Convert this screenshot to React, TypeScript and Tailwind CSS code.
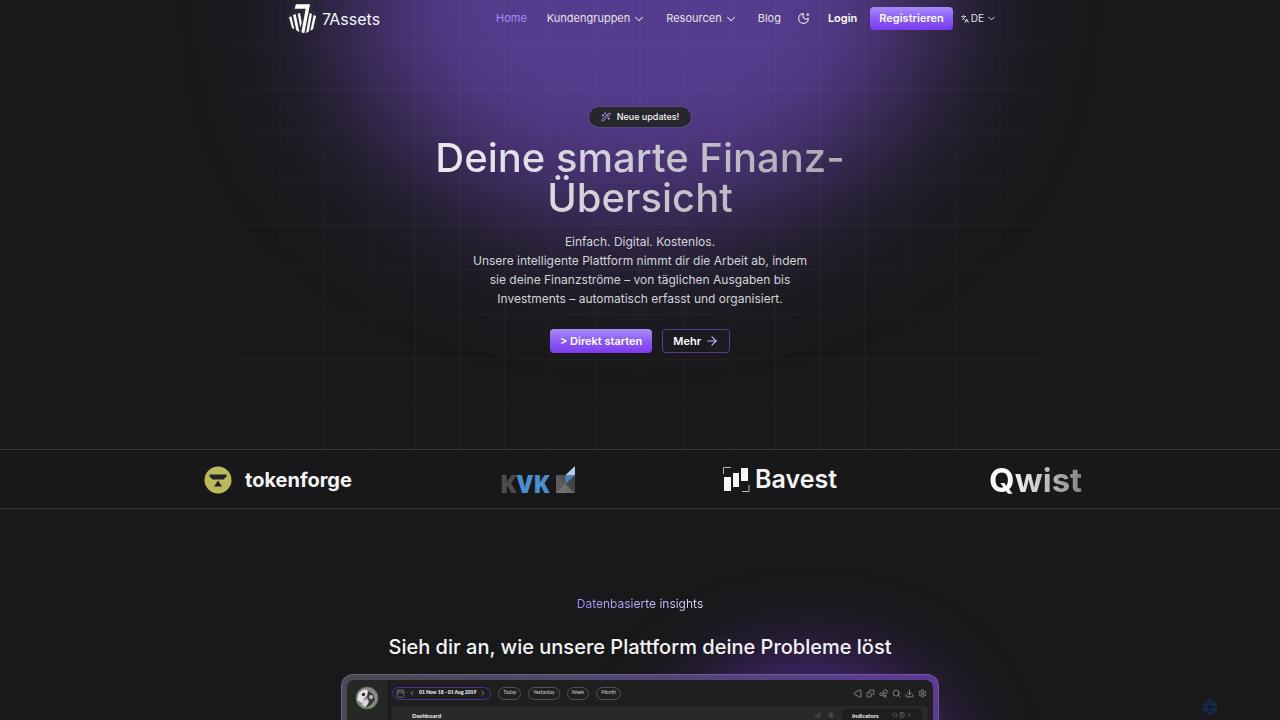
import { ReactNode } from "react";
import {
  ArrowRight,
  Calendar,
  ChevronDown,
  ChevronLeft,
  ChevronRight,
  Languages,
  MoonStar,
  Puzzle,
  Search,
  Settings,
  Signal,
  Triangle,
  WandSparkles,
  X,
  Download,
  Columns3,
} from "lucide-react";

function BrandMark() {
  return (
    <svg viewBox="0 0 90 96" className="h-8 w-[30px]" aria-hidden="true">
      <path
        d="M22 0 L68 0 L90 36 L82 78 L46 96 L10 78 L0 36 Z"
        fill="#2b2d38"
        opacity="0.8"
      />
      <g fill="#fff">
        <path d="M24 4 H66 L49 91 L40 88 L53 17 H20 Z" />
        <path d="M3 43 L10 40 L19 79 L12 75 Z" />
        <path d="M15 36 L23 33 L34 87 L25 82 Z" />
        <path d="M29 32 L36 30 L41 58 L37 74 Z" />
        <path d="M65 30 L72 33 L62 86 L54 90 Z" />
        <path d="M77 36 L84 39 L75 79 L67 83 Z" />
      </g>
    </svg>
  );
}

function Header() {
  return (
    <header className="relative mx-auto flex h-[37px] w-full max-w-[720px] items-center justify-between pr-[3px] pl-2">
      <a href="#home" className="flex items-center gap-1 text-[16px] text-zinc-100">
        <BrandMark />
        7Assets
      </a>
      <div className="flex items-center text-[11px] text-zinc-200">
        <nav className="flex items-center gap-5">
          <a href="#home" className="text-[#a78bfa]">
            Home
          </a>
          <button type="button" className="flex items-center gap-0.5">
            Kundengruppen
            <ChevronDown size={14} strokeWidth={1.75} />
          </button>
          <button type="button" className="flex items-center gap-0.5">
            Resourcen
            <ChevronDown size={14} strokeWidth={1.75} />
          </button>
          <a href="#blog">Blog</a>
        </nav>
        <button type="button" aria-label="Theme" className="ml-4">
          <MoonStar size={13} />
        </button>
        <a href="#login" className="ml-[18px] font-semibold text-white">
          Login
        </a>
        <a
          href="#register"
          className="ml-[13px] flex h-[23px] items-center rounded-[4px] bg-linear-to-b from-[#a78bfa] via-[#8b5cf6] to-[#7c3aed] px-[9px] font-semibold text-white"
        >
          Registrieren
        </a>
        <button type="button" className="ml-2 flex items-center gap-0.5 text-[10px]">
          <Languages size={8} strokeWidth={2.5} />
          DE
          <ChevronDown size={11} strokeWidth={2} />
        </button>
      </div>
    </header>
  );
}

function HeroBackdrop() {
  return (
    <div className="pointer-events-none absolute inset-0 overflow-hidden" aria-hidden="true">
      <div className="absolute -top-[220px] left-1/2 h-[440px] w-[600px] -translate-x-1/2 rounded-[50%] bg-[#563c8e] blur-[70px]" />
      <div className="absolute inset-y-0 left-1/2 w-[810px] -translate-x-1/2 bg-[linear-gradient(to_top,#ffffff08_1px,transparent_1px)] bg-size-[45px_45px]" />
      <div className="absolute inset-y-0 left-1/2 w-[721px] -translate-x-1/2 bg-[linear-gradient(to_right,#ffffff08_1px,transparent_1px)] bg-size-[45px_45px]" />
    </div>
  );
}

function Hero() {
  return (
    <section className="relative flex flex-col items-center pt-[70px] pb-24 text-center">
      <div className="flex h-5 items-center gap-1.5 rounded-full bg-[#27262c] px-3 text-[9px] font-medium text-zinc-100 ring-1 ring-zinc-500/30">
        <WandSparkles size={10} className="text-[#b9a5fb]" />
        Neue updates!
      </div>
      <h1 className="mt-[11px] max-w-[480px] bg-linear-to-r from-[#e8e6ee] from-10% to-[#b0adb8] to-90% bg-clip-text pb-1 text-[40px] leading-10 font-medium text-transparent">
        Deine smarte Finanz-
        <br />
        Übersicht
      </h1>
      <p className="mt-[10px] mb-[21px] max-w-[340px] text-[12px] leading-[19px] text-zinc-300">
        Einfach. Digital. Kostenlos.
        <br />
        Unsere intelligente Plattform nimmt dir die Arbeit ab, indem sie deine Finanzströme – von
        täglichen Ausgaben bis Investments – automatisch erfasst und organisiert.
      </p>
      <div className="flex gap-2.5 text-[11px] font-semibold text-white">
        <a
          href="#start"
          className="flex h-6 items-center rounded-[4px] bg-linear-to-b from-[#a78bfa] via-[#8b5cf6] to-[#7c3aed] px-2.5"
        >
          &gt; Direkt starten
        </a>
        <a
          href="#more"
          className="flex h-6 items-center gap-1 rounded-[4px] border border-[#5b3a9a] bg-[#1c1b20] px-2.5"
        >
          Mehr
          <ArrowRight size={14} className="text-[#c4b5fd]" />
        </a>
      </div>
    </section>
  );
}

function Partners() {
  return (
    <section className="relative flex h-[60px] items-center justify-center gap-[148px] overflow-hidden border-y border-zinc-700/80 bg-[#18181a] pt-px pl-1.5">
      <div className="flex w-[148px] shrink-0 items-center gap-[13px] text-[20px] font-bold text-zinc-100">
        <svg viewBox="0 0 28 28" className="size-7 shrink-0" aria-hidden="true">
          <circle cx="14" cy="14" r="13.5" fill="#bdb95a" />
          <path d="M5.500 8.500h17v2l-3 3h-11l-3-3z" fill="#1d242b" />
          <path d="M14 14.500l4 6h-8z" fill="#1d242b" />
        </svg>
        tokenforge
      </div>
      <div className="flex w-[75px] shrink-0 items-center justify-between">
        <span className="flex pt-2 font-['Open_Sans',sans-serif] text-[24px] leading-7 font-extrabold text-[#4b4b4d]">
          K<span className="text-[#4a8fcb]">VK</span>
        </span>
        <svg viewBox="0 0 19 28" className="h-7 w-[19px]" aria-hidden="true">
          <path d="M0 9h19v18H0z" fill="#505052" />
          <path d="M0 9l9.500 9L0 27z" fill="#5e5c5b" />
          <path d="M0 27l9.500-9 9.500 9z" fill="#6b6866" />
          <path d="M9.500 18l9.500 9V9z" fill="#434449" />
          <path d="M9.500 9v9l9.500-9z" fill="#4d84b5" />
          <path d="M9.500 9H19V0z" fill="#b4cbe8" />
          <path d="M0 27h9.500v-9z" fill="#77716d" />
        </svg>
      </div>
      <div className="flex w-[118px] shrink-0 items-center gap-[5px] text-[25px] font-semibold text-zinc-100">
        <svg viewBox="0 0 27 26" className="h-[26px] w-[27px] shrink-0" aria-hidden="true">
          <g fill="#f4f4f5">
            <path d="M1 10h7v14H1zM10 6h6v14h-6zM18 1h7v13h-7z" />
          </g>
          <path d="M.5 7V.5H8M19 24.500h7V18" fill="none" stroke="#b5b5b8" />
        </svg>
        Bavest
      </div>
      <div className="w-[93px] shrink-0 bg-linear-to-r from-white from-20% to-[#858588] bg-clip-text text-[33px] leading-9 font-bold text-transparent">
        Qwist
      </div>
    </section>
  );
}

function Pill({ children }: { children: ReactNode }) {
  return (
    <button
      type="button"
      className="flex h-[13px] items-center rounded-full border border-zinc-600 px-1 text-[5px] text-zinc-300"
    >
      {children}
    </button>
  );
}

function BubblesIcon() {
  return (
    <svg viewBox="0 0 24 24" className="size-[9px]" fill="none" stroke="currentColor" strokeWidth="2" aria-hidden="true">
      <circle cx="17" cy="7" r="5" />
      <circle cx="6" cy="14" r="4" />
      <circle cx="16" cy="19" r="3" />
      <path d="M10 12l3-2M10 16l3 2" />
    </svg>
  );
}

function DashboardPreview() {
  return (
    <div className="relative mt-[13px] w-full max-w-[598px] rounded-t-xl border border-b-0 border-white/15 bg-linear-to-r from-[#4a4a52] to-[#5b3a98] px-[5px] pt-[5px] font-['Lato','Liberation_Sans',sans-serif]">
      <div className="flex overflow-hidden rounded-t-lg bg-[#1f1f1f]">
        <div className="flex w-10 shrink-0 justify-center bg-[#272727] pt-1.5">
          <svg viewBox="0 0 24 24" className="size-6" aria-hidden="true">
            <circle cx="12" cy="12" r="11" fill="#8a8a8a" stroke="#4c7a3c" strokeWidth="1" />
            <path d="M4 7q4-5 8-3l2 4-4 3-3 6-5-3z" fill="#e4e4e4" />
            <path d="M13 5l5 3 2 6-4 5-5 3-1-5 4-2-2-4z" fill="#3a3a3a" />
            <path d="M8 15l4-2 2 3-3 5-4-2z" fill="#d6d6d6" />
            <circle cx="8.500" cy="8.500" r="1.800" fill="#2f2f2f" />
            <circle cx="16" cy="11" r="2" fill="#bdbdbd" />
          </svg>
        </div>
        <div className="min-w-0 flex-1 px-[5px]">
          <div className="flex h-[26px] items-center justify-between pr-px">
            <div className="flex items-center gap-[7px]">
              <div className="flex h-[13px] items-center gap-[3px] rounded-full border border-[#4b2f94] px-[3px] text-[5px] font-black text-zinc-100">
                <Calendar size={9} strokeWidth={1.5} className="text-zinc-400" />
                <ChevronLeft size={8} className="text-zinc-400" />
                01 Now 18 - 01 Aug 2019
                <ChevronRight size={8} className="text-zinc-400" />
              </div>
              <Pill>Today</Pill>
              <Pill>Yestarday</Pill>
              <Pill>Week</Pill>
              <Pill>Month</Pill>
            </div>
            <div className="flex items-center gap-1 text-zinc-400">
              <Triangle size={9} className="-rotate-90" />
              <Puzzle size={9} />
              <BubblesIcon />
              <Search size={9} />
              <Download size={9} />
              <Settings size={9} />
            </div>
          </div>
          <div className="flex h-[14px] items-end justify-between rounded-t-[4px] bg-[#292929] pr-1.5 pl-5 text-[6px] leading-[9px] font-black text-zinc-200">
            Dashboard
            <div className="flex items-end gap-2">
              <Signal size={6} className="mb-0.5 text-zinc-500" />
              <Settings size={6} className="mb-0.5 text-zinc-500" />
              <div className="flex h-[11px] w-20 items-end justify-between rounded-t-[4px] bg-[#1e1e1e] px-2.5">
                Indicators
                <span className="mb-0.5 flex gap-px text-zinc-500">
                  <Search size={6} />
                  <Columns3 size={6} />
                  <X size={6} />
                </span>
              </div>
            </div>
          </div>
        </div>
      </div>
    </div>
  );
}

function Insights() {
  return (
    <section className="relative flex flex-col items-center overflow-hidden pt-[86px] text-center">
      <div
        className="pointer-events-none absolute top-[155px] left-1/2 ml-[30px] h-[240px] w-[280px] rounded-[50%] bg-[#542a90] blur-[42px]"
        aria-hidden="true"
      />
      <p className="relative bg-linear-to-r from-[#a78bfa] to-[#ddd6fe] bg-clip-text text-[12px] leading-[18px] text-transparent">
        Datenbasierte insights
      </p>
      <h2 className="relative mt-5 text-[20px] leading-7 font-medium text-zinc-100">
        Sieh dir an, wie unsere Plattform deine Probleme löst
      </h2>
      <DashboardPreview />
    </section>
  );
}

function ChatLauncher() {
  return (
    <button type="button" aria-label="Chat" className="fixed right-[62px] bottom-[5px]">
      <svg viewBox="0 0 16 16" className="size-4" fill="none" stroke="#15315f" strokeWidth="1.300" aria-hidden="true">
        <path d="M8 1l6 3.500v7L8 15l-6-3.500v-7z" />
        <path d="M8 4.500l3.200 1.800v3.500L8 11.600 4.800 9.800V6.300zM8 1v3.500M14 4.500l-2.800 1.800M14 11.500l-2.800-1.700M8 15v-3.400M2 11.500l2.800-1.700M2 4.500l2.800 1.800" />
      </svg>
    </button>
  );
}

export default function App() {
  return (
    <div className="min-h-screen overflow-x-clip bg-[#19191b] font-['Inter','Liberation_Sans',sans-serif]">
      <div className="relative">
        <HeroBackdrop />
        <Header />
        <Hero />
      </div>
      <Partners />
      <main>
        <Insights />
      </main>
      <ChatLauncher />
    </div>
  );
}
